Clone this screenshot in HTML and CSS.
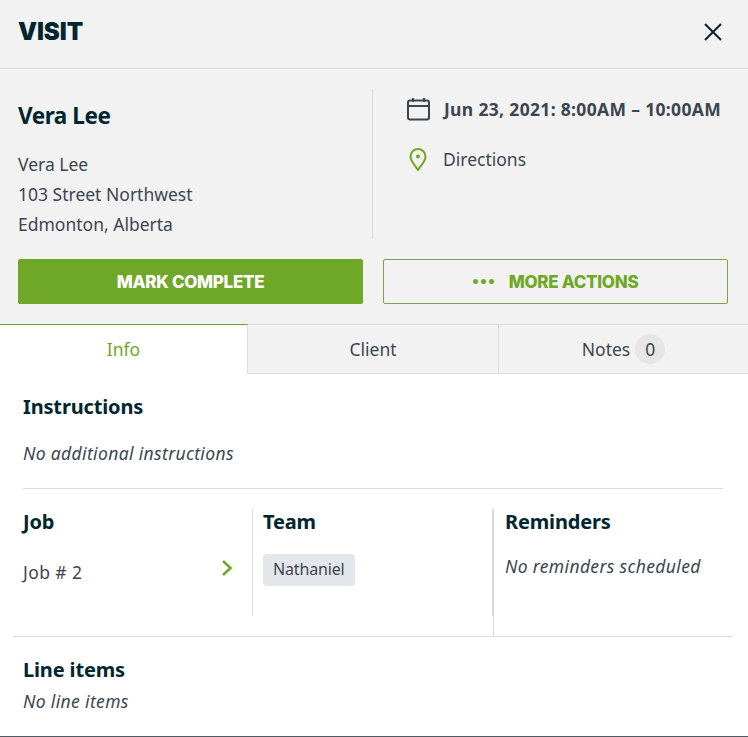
FILE: index.html
```html
<!DOCTYPE html>
<html lang="en">
<head>
<meta charset="utf-8">
<title>Visit</title>
<link rel="stylesheet" href="styles.css">
</head>
<body>
<div class="panel">
  <header class="top">
    <h1 class="title">VISIT</h1>
    <svg class="close" width="24" height="24" viewBox="0 0 24 24" fill="none" stroke="#01262f" stroke-width="2"><path d="M4 4 L20 20 M20 4 L4 20"/></svg>
  </header>
  <section class="summary">
    <div class="details">
      <div class="client">
        <h2 class="name">Vera Lee</h2>
        <p class="address">Vera Lee<br>103 Street Northwest<br>Edmonton, Alberta</p>
      </div>
      <div class="meta">
        <div class="meta-row">
          <svg class="meta-icon" width="24" height="24" viewBox="0 0 24 24" fill="none" stroke="#3b4650" stroke-width="2"><rect x="2" y="3.500" width="21" height="19" rx="2"/><path d="M2 9 H23 M7 1 V5 M18 1 V5"/></svg>
          <strong class="when">Jun 23, 2021: 8:00AM – 10:00AM</strong>
        </div>
        <div class="meta-row">
          <svg class="meta-icon" width="24" height="24" viewBox="0 0 24 24" fill="none" stroke="#6fa826" stroke-width="2"><path d="M12 23 C9 18 4.500 14.500 4.500 9.500 A7.500 7.500 0 0 1 19.500 9.500 C19.500 14.500 15 18 12 23 Z"/><circle cx="12" cy="9.500" r="2" fill="#6fa826" stroke="none"/></svg>
          <span>Directions</span>
        </div>
      </div>
    </div>
    <div class="actions">
      <button class="btn primary">MARK COMPLETE</button>
      <button class="btn outline"><span class="dots"><i></i><i></i><i></i></span>MORE ACTIONS</button>
    </div>
  </section>
  <nav class="tabs">
    <div class="tab active">Info</div>
    <div class="tab client-tab">Client</div>
    <div class="tab notes-tab">Notes <span class="count">0</span></div>
  </nav>
  <main class="content">
    <section class="instructions">
      <h3 class="heading">Instructions</h3>
      <p class="empty">No additional instructions</p>
    </section>
    <section class="columns">
      <div class="col job">
        <h3 class="heading">Job</h3>
        <div class="job-row">
          <span class="job-name">Job # 2</span>
          <svg width="12" height="18" viewBox="0 0 12 18" fill="none" stroke="#6fa826" stroke-width="2.500"><path d="M2 2 L9.500 9 L2 16"/></svg>
        </div>
      </div>
      <div class="col team">
        <h3 class="heading">Team</h3>
        <span class="chip">Nathaniel</span>
      </div>
      <div class="col reminders">
        <h3 class="heading">Reminders</h3>
        <p class="empty">No reminders scheduled</p>
      </div>
    </section>
    <section class="items">
      <h3 class="heading">Line items</h3>
      <p class="empty">No line items</p>
    </section>
  </main>
</div>
</body>
</html>
```
FILE: styles.css
```css
* { box-sizing: border-box; }
html, body { margin: 0; padding: 0; }
body {
  background: #fff;
  color: #3b4650;
  font-family: "Noto Sans", "Lato", sans-serif;
  font-size: 17.5px;
  line-height: 30px;
}
h1, h2, h3, p { margin: 0; }
.panel {
  height: 737px;
  display: flex;
  flex-direction: column;
  border-bottom: 1px solid #4d5b63;
  overflow: hidden;
}
.top {
  height: 69px;
  flex: none;
  display: flex;
  align-items: center;
  justify-content: space-between;
  padding: 0 23px 4px 18px;
  background: #f2f2f2;
  border-bottom: 1px solid #dcdcdc;
}
.title {
  font-family: "Inter", sans-serif;
  font-weight: 900;
  font-size: 24px;
  line-height: 28px;
  letter-spacing: -0.1px;
  color: #01262f;
}
.summary {
  height: 255px;
  flex: none;
  background: #f2f2f2;
  padding: 20px 20px 20px 18px;
}
.details { display: flex; height: 150px; }
.client { width: 355px; flex: none; border-right: 1px solid #d9d9d9; }
.name {
  font-size: 22.5px;
  line-height: 30px;
  font-weight: 700;
  letter-spacing: -0.45px;
  color: #01262f;
  margin: 12px 0 18px;
}
.meta { padding: 5px 0 0 33px; flex: 1; display: flex; flex-direction: column; gap: 20px; }
.meta-row { display: flex; align-items: center; gap: 13px; height: 30px; }
.meta-icon { flex: none; }
.when { font-weight: 700; letter-spacing: 0.33px; margin-left: 1px; white-space: nowrap; }
.actions { display: flex; gap: 20px; margin-top: 20px; }
.btn {
  flex: 1;
  height: 45px;
  border-radius: 2px;
  font-family: "Inter", sans-serif;
  font-weight: 800;
  font-size: 17px;
  letter-spacing: -0.3px;
  display: flex;
  align-items: center;
  justify-content: center;
  padding: 0;
}
.primary { background: #6fa826; border: 1px solid #6fa826; color: #fff; }
.outline { background: transparent; border: 1px solid #7fa050; color: #6fa826; }
.dots { display: flex; gap: 3px; margin-right: 15px; }
.dots i { width: 5px; height: 5px; border-radius: 50%; background: #6fa826; }
.tabs { display: flex; height: 50px; flex: none; background: #f2f2f2; }
.tab {
  display: flex;
  align-items: center;
  justify-content: center;
  gap: 5px;
  border-top: 1px solid #dcdcdc;
  border-bottom: 1px solid #dcdcdc;
}
.active {
  width: 248px;
  padding-bottom: 1px;
  background: #fff;
  color: #6fa826;
  border-top-color: #6fa826;
  border-bottom: 0;
  border-right: 1px solid #dcdcdc;
}
.client-tab { width: 251px; border-right: 1px solid #dcdcdc; }
.notes-tab { flex: 1; }
.count {
  width: 30px;
  height: 30px;
  border-radius: 50%;
  background: #e6e6e6;
  text-align: center;
}
.content { flex: 1; background: #fff; }
.heading {
  font-size: 20px;
  line-height: 30px;
  font-weight: 700;
  letter-spacing: -0.15px;
  color: #01262f;
}
.empty { font-style: italic; letter-spacing: 0.35px; }
.instructions {
  margin: 0 25px 0 23px;
  height: 115px;
  padding-top: 18px;
  border-bottom: 1px solid #dcdcdc;
}
.instructions .empty { margin-top: 16px; }
.columns {
  margin: 0 15px 0 13px;
  height: 148px;
  padding-top: 20px;
  display: flex;
  align-items: flex-start;
  border-bottom: 1px solid #dcdcdc;
}
.columns .heading { line-height: 26px; }
.col { height: 107px; }
.job { width: 240px; padding: 0 19px 0 10px; border-right: 1px solid #d9d9d9; }
.job-row { display: flex; justify-content: space-between; align-items: flex-start; margin-top: 22px; }
.job-name { letter-spacing: 0.4px; }
.job-row svg { margin-top: 2px; }
.team { width: 240px; padding-left: 10px; border-right: 1px solid #d9d9d9; }
.chip {
  display: inline-block;
  margin-top: 19px;
  padding: 0 10px;
  height: 32px;
  font-size: 16px;
  line-height: 31px;
  letter-spacing: -0.15px;
  border-radius: 4px;
  background: #e4e7ea;
}
.reminders { flex: 1; height: 127px; padding-left: 11px; border-left: 1px solid #d9d9d9; }
.reminders .empty { margin-top: 16px; }
.items { padding: 18px 23px 0; }
.items .empty { margin-top: 1px; }
```
